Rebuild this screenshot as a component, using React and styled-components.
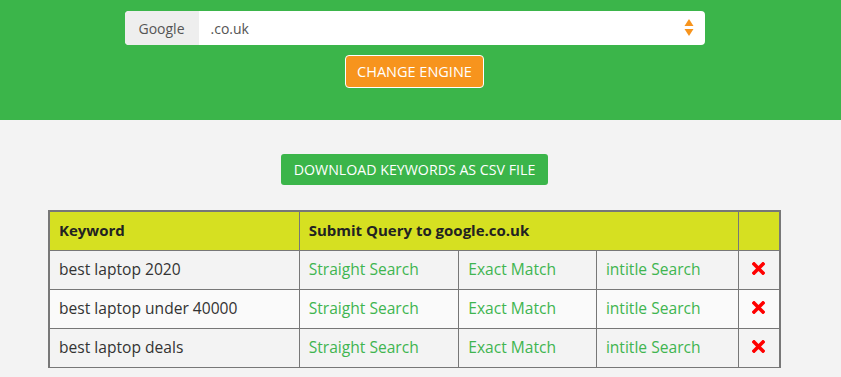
import styled, { createGlobalStyle } from "styled-components";

const Global = createGlobalStyle`
  body {
    margin: 0;
    background: #f3f3f3;
    font-family: "Open Sans", Lato, sans-serif;
    color: #333;
  }
  * { box-sizing: border-box; }
`;

const Header = styled.div`
  background: #3bb54a;
  height: 120px;
  padding: 11px 12px 0 0;
  display: flex;
  flex-direction: column;
  align-items: center;
`;

const InputGroup = styled.div`
  width: 580px;
  height: 34px;
  display: flex;
  background: #fff;
  border-radius: 4px;
  overflow: hidden;
`;

const Addon = styled.div`
  width: 74px;
  background: #eee;
  color: #555;
  font-size: 14px;
  display: flex;
  align-items: center;
  justify-content: center;
`;

const Select = styled.div`
  flex: 1;
  display: flex;
  align-items: center;
  justify-content: space-between;
  padding: 0 11px 0 12px;
  font-size: 14px;
  color: #555;
`;

const OrangeButton = styled.button`
  margin-top: 10px;
  width: 139px;
  height: 33px;
  background: #f7941d;
  border: 1px solid #fff;
  border-radius: 4px;
  color: #fff;
  font-family: inherit;
  font-size: 14.5px;
  padding: 0;
`;

const Body = styled.div`
  padding: 34px 12px 0 0;
  display: flex;
  flex-direction: column;
  align-items: center;
`;

const GreenButton = styled.button`
  width: 267px;
  height: 31px;
  background: #3bb54a;
  border: none;
  border-radius: 3px;
  color: #fff;
  font-family: inherit;
  font-size: 14.2px;
  padding: 0;
`;

const Table = styled.table`
  margin-top: 25px;
  width: 733px;
  border-collapse: collapse;
  font-size: 15.6px;
`;

const Th = styled.th`
  background: #d6e021;
  border: 2px solid #777;
  border-width: 2px 1px 1px;
  height: 39px;
  padding: 0 9px 2px;
  text-align: left;
  font-weight: 700;
  font-size: 15px;
  color: #222;
  &:first-child { border-left-width: 2px; }
  &:last-child { border-right-width: 2px; }
`;

const Row = styled.tr`
  background: ${(p) => (p.$alt ? "#fafafa" : "#f3f3f3")};
`;

const Td = styled.td`
  border: 1px solid #777;
  height: 39px;
  padding: 0 9px 2px;
  color: ${(p) => (p.$link ? "#3fb550" : "#333")};
  text-align: ${(p) => (p.$center ? "center" : "left")};
  &:first-child { border-left-width: 2px; }
  &:last-child { border-right-width: 2px; }
`;

const Arrows = () => (
  <svg width="10" height="18" viewBox="0 0 10 18">
    <path d="M5 0 L9.5 7 L0.5 7 Z" fill="#f7941d" />
    <path d="M5 17 L9.5 10 L0.5 10 Z" fill="#f7941d" />
  </svg>
);

const Cross = () => (
  <svg width="13" height="13" viewBox="0 0 13 13">
    <path d="M2 2 L11 11 M11 2 L2 11" stroke="#f00" strokeWidth="3.6" strokeLinecap="square" />
  </svg>
);

const keywords = ["best laptop 2020", "best laptop under 40000", "best laptop deals"];

export default function App() {
  return (
    <>
      <Global />
      <Header>
        <InputGroup>
          <Addon>Google</Addon>
          <Select>
            <span>.co.uk</span>
            <Arrows />
          </Select>
        </InputGroup>
        <OrangeButton>CHANGE ENGINE</OrangeButton>
      </Header>
      <Body>
        <GreenButton>DOWNLOAD KEYWORDS AS CSV FILE</GreenButton>
        <Table>
          <colgroup>
            <col style={{ width: 251 }} />
            <col style={{ width: 160 }} />
            <col style={{ width: 138 }} />
            <col style={{ width: 142 }} />
            <col style={{ width: 42 }} />
          </colgroup>
          <thead>
            <tr>
              <Th>Keyword</Th>
              <Th colSpan={3}>Submit Query to google.co.uk</Th>
              <Th />
            </tr>
          </thead>
          <tbody>
            {keywords.map((k, i) => (
              <Row key={k} $alt={i % 2 === 1}>
                <Td>{k}</Td>
                <Td $link>Straight Search</Td>
                <Td $link>Exact Match</Td>
                <Td $link>intitle Search</Td>
                <Td $center><Cross /></Td>
              </Row>
            ))}
          </tbody>
        </Table>
      </Body>
    </>
  );
}
